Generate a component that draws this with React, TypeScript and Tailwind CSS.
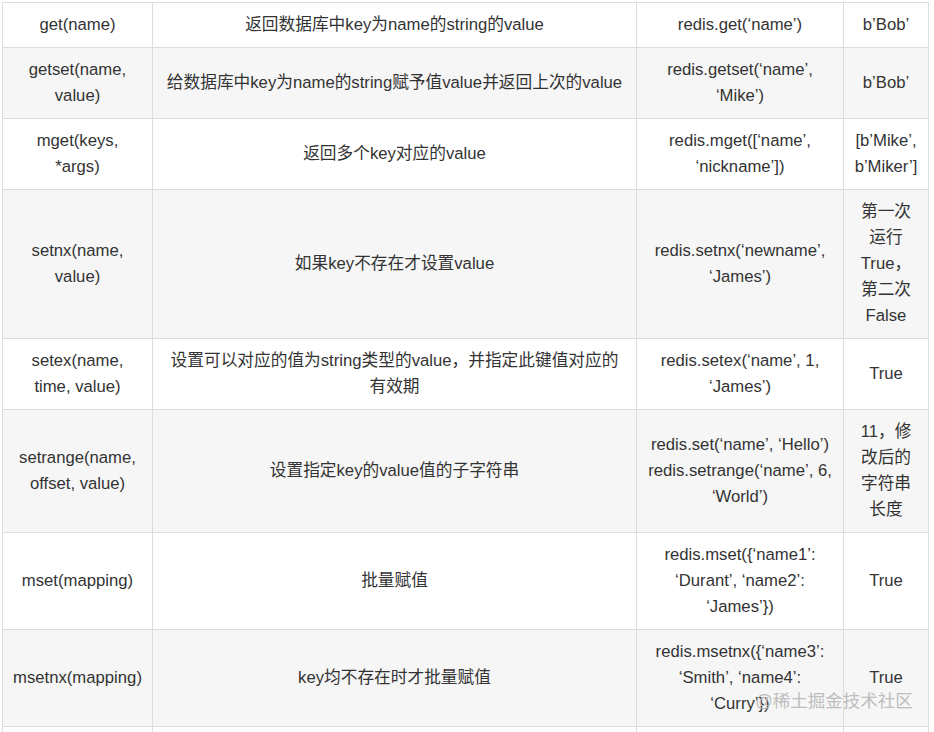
import React from "react";

type Row = { c: React.ReactNode[] };

const L = (...lines: string[]) =>
  lines.map((l, i) => (
    <React.Fragment key={i}>
      {i > 0 && <br />}
      {l}
    </React.Fragment>
  ));

const rows: Row[] = [
  { c: [L("get(name)"), L("返回数据库中key为name的string的value"), L("redis.get(‘name’)"), L("b’Bob’")] },
  { c: [L("getset(name,", "value)"), L("给数据库中key为name的string赋予值value并返回上次的value"), L("redis.getset(‘name’,", "‘Mike’)"), L("b’Bob’")] },
  { c: [L("mget(keys,", "*args)"), L("返回多个key对应的value"), L("redis.mget([‘name’,", "‘nickname’])"), L("[b’Mike’,", "b’Miker’]")] },
  { c: [L("setnx(name,", "value)"), L("如果key不存在才设置value"), L("redis.setnx(‘newname’,", "‘James’)"), L("第一次", "运行", "True，", "第二次", "False")] },
  { c: [L("setex(name,", "time, value)"), L("设置可以对应的值为string类型的value，并指定此键值对应的", "有效期"), L("redis.setex(‘name’, 1,", "‘James’)"), L("True")] },
  { c: [L("setrange(name,", "offset, value)"), L("设置指定key的value值的子字符串"), L("redis.set(‘name’, ‘Hello’)", "redis.setrange(‘name’, 6,", "‘World’)"), L("11，修", "改后的", "字符串", "长度")] },
  { c: [L("mset(mapping)"), L("批量赋值"), L("redis.mset({‘name1’:", "‘Durant’, ‘name2’:", "‘James’})"), L("True")] },
  { c: [L("msetnx(mapping)"), L("key均不存在时才批量赋值"), L("redis.msetnx({‘name3’:", "‘Smith’, ‘name4’:", "‘Curry’})"), L("True")] },
];

export default function App() {
  return (
    <div
      className="relative h-[732px] w-[934px] overflow-hidden bg-white pl-[2px] pt-[2px]"
      style={{ fontFamily: '"Liberation Sans", Arial, "Noto Sans CJK SC", sans-serif' }}
    >
      <table className="w-[926px] table-fixed border-collapse border border-[#dddddd] text-[16.7px] leading-[26px] text-[#333333]">
        <colgroup>
          <col className="w-[150px]" />
          <col className="w-[484px]" />
          <col className="w-[207px]" />
          <col className="w-[85px]" />
        </colgroup>
        <tbody>
          {rows.map((r, i) => (
            <tr key={i} className={i % 2 === 1 ? "bg-[#f6f6f6]" : "bg-white"}>
              {r.c.map((cell, j) => (
                <td
                  key={j}
                  className="border border-[#dddddd] px-[8px] py-[9px] text-center align-middle whitespace-nowrap"
                >
                  {cell}
                </td>
              ))}
            </tr>
          ))}
          <tr className="h-[45px] bg-white">
            <td className="border border-[#dddddd]" />
            <td className="border border-[#dddddd]" />
            <td className="border border-[#dddddd]" />
            <td className="border border-[#dddddd]" />
          </tr>
        </tbody>
      </table>
      <div className="pointer-events-none absolute left-[755px] top-[689px] text-[17.5px] leading-[24px] text-[#b8b8b8] opacity-90">
        @稀土掘金技术社区
      </div>
    </div>
  );
}
